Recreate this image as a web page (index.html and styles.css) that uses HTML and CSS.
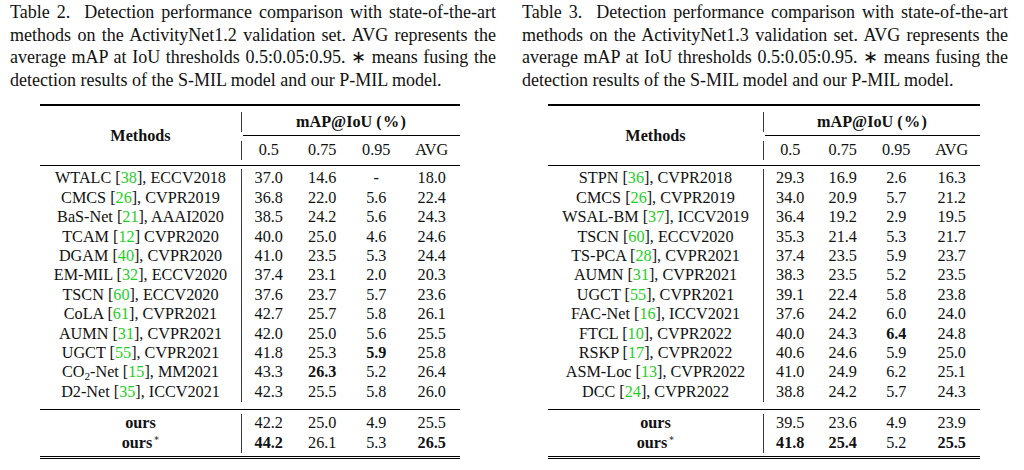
FILE: index.html
```html
<!DOCTYPE html>
<html lang="en">
<head>
<meta charset="utf-8">
<title>Detection performance tables</title>
<link rel="stylesheet" href="styles.css">
</head>
<body>
<main class="page">
  <section class="panel">
    <p class="caption">Table 2.&nbsp; Detection performance comparison with state-of-the-art methods on the ActivityNet1.2 validation set. AVG represents the average mAP at IoU thresholds 0.5:0.05:0.95. ∗ means fusing the detection results of the S-MIL model and our P-MIL model.</p>
    <table class="res res--left">
      <colgroup>
        <col class="c-m"><col class="c-a"><col class="c-b"><col class="c-c"><col class="c-d">
      </colgroup>
      <thead>
        <tr class="gap g6"><td colspan="5"></td></tr>
        <tr class="hdr1"><th class="m b" rowspan="5">Methods</th><th class="grp b vr" colspan="4">mAP@IoU (&#8202;%&#8202;)</th></tr>
        <tr class="gap g3"><td colspan="4"></td></tr>
        <tr class="cmid"><td colspan="4"><div class="cmid-line"></div></td></tr>
        <tr class="gap g5"><td colspan="4"></td></tr>
        <tr class="hdr2"><th class="vr">0.5</th><th>0.75</th><th>0.95</th><th>AVG</th></tr>
        <tr class="gap g5"><td colspan="5"></td></tr>
        <tr class="rule"><td colspan="5"></td></tr>
        <tr class="gap g3"><td colspan="5"></td></tr>
      </thead>
      <tbody>
        <tr><td class="m">WTALC [<span class="cite">38</span>], ECCV2018</td><td class="vr">37.0</td><td>14.6</td><td>-</td><td>18.0</td></tr>
        <tr><td class="m">CMCS [<span class="cite">26</span>], CVPR2019</td><td class="vr">36.8</td><td>22.0</td><td>5.6</td><td>22.4</td></tr>
        <tr><td class="m">BaS-Net [<span class="cite">21</span>], AAAI2020</td><td class="vr">38.5</td><td>24.2</td><td>5.6</td><td>24.3</td></tr>
        <tr><td class="m">TCAM [<span class="cite">12</span>] CVPR2020</td><td class="vr">40.0</td><td>25.0</td><td>4.6</td><td>24.6</td></tr>
        <tr><td class="m">DGAM [<span class="cite">40</span>], CVPR2020</td><td class="vr">41.0</td><td>23.5</td><td>5.3</td><td>24.4</td></tr>
        <tr><td class="m">EM-MIL [<span class="cite">32</span>], ECCV2020</td><td class="vr">37.4</td><td>23.1</td><td>2.0</td><td>20.3</td></tr>
        <tr><td class="m">TSCN [<span class="cite">60</span>], ECCV2020</td><td class="vr">37.6</td><td>23.7</td><td>5.7</td><td>23.6</td></tr>
        <tr><td class="m">CoLA [<span class="cite">61</span>], CVPR2021</td><td class="vr">42.7</td><td>25.7</td><td>5.8</td><td>26.1</td></tr>
        <tr><td class="m">AUMN [<span class="cite">31</span>], CVPR2021</td><td class="vr">42.0</td><td>25.0</td><td>5.6</td><td>25.5</td></tr>
        <tr><td class="m">UGCT [<span class="cite">55</span>], CVPR2021</td><td class="vr">41.8</td><td>25.3</td><td class="b">5.9</td><td>25.8</td></tr>
        <tr><td class="m">CO<sub>2</sub>-Net [<span class="cite">15</span>], MM2021</td><td class="vr">43.3</td><td class="b">26.3</td><td>5.2</td><td>26.4</td></tr>
        <tr><td class="m">D2-Net [<span class="cite">35</span>], ICCV2021</td><td class="vr">42.3</td><td>25.5</td><td>5.8</td><td>26.0</td></tr>
        <tr class="gap g7"><td colspan="5"></td></tr>
        <tr class="rule"><td colspan="5"></td></tr>
        <tr class="gap g4"><td colspan="5"></td></tr>
        <tr><td class="m b">ours</td><td class="vr">42.2</td><td>25.0</td><td>4.9</td><td>25.5</td></tr>
        <tr><td class="m b">ours<sup>∗</sup></td><td class="vr b">44.2</td><td>26.1</td><td>5.3</td><td class="b">26.5</td></tr>
        <tr class="gap g3"><td colspan="5"></td></tr>
      </tbody>
    </table>
  </section>

  <section class="panel">
    <p class="caption">Table 3.&nbsp; Detection performance comparison with state-of-the-art methods on the ActivityNet1.3 validation set. AVG represents the average mAP at IoU thresholds 0.5:0.05:0.95. ∗ means fusing the detection results of the S-MIL model and our P-MIL model.</p>
    <table class="res res--right">
      <colgroup>
        <col class="c-m"><col class="c-a"><col class="c-b"><col class="c-c"><col class="c-d">
      </colgroup>
      <thead>
        <tr class="gap g6"><td colspan="5"></td></tr>
        <tr class="hdr1"><th class="m b" rowspan="5">Methods</th><th class="grp b vr" colspan="4">mAP@IoU (&#8202;%&#8202;)</th></tr>
        <tr class="gap g3"><td colspan="4"></td></tr>
        <tr class="cmid"><td colspan="4"><div class="cmid-line"></div></td></tr>
        <tr class="gap g5"><td colspan="4"></td></tr>
        <tr class="hdr2"><th class="vr">0.5</th><th>0.75</th><th>0.95</th><th>AVG</th></tr>
        <tr class="gap g5"><td colspan="5"></td></tr>
        <tr class="rule"><td colspan="5"></td></tr>
        <tr class="gap g3"><td colspan="5"></td></tr>
      </thead>
      <tbody>
        <tr><td class="m">STPN [<span class="cite">36</span>], CVPR2018</td><td class="vr">29.3</td><td>16.9</td><td>2.6</td><td>16.3</td></tr>
        <tr><td class="m">CMCS [<span class="cite">26</span>], CVPR2019</td><td class="vr">34.0</td><td>20.9</td><td>5.7</td><td>21.2</td></tr>
        <tr><td class="m">WSAL-BM [<span class="cite">37</span>], ICCV2019</td><td class="vr">36.4</td><td>19.2</td><td>2.9</td><td>19.5</td></tr>
        <tr><td class="m">TSCN [<span class="cite">60</span>], ECCV2020</td><td class="vr">35.3</td><td>21.4</td><td>5.3</td><td>21.7</td></tr>
        <tr><td class="m">TS-PCA [<span class="cite">28</span>], CVPR2021</td><td class="vr">37.4</td><td>23.5</td><td>5.9</td><td>23.7</td></tr>
        <tr><td class="m">AUMN [<span class="cite">31</span>], CVPR2021</td><td class="vr">38.3</td><td>23.5</td><td>5.2</td><td>23.5</td></tr>
        <tr><td class="m">UGCT [<span class="cite">55</span>], CVPR2021</td><td class="vr">39.1</td><td>22.4</td><td>5.8</td><td>23.8</td></tr>
        <tr><td class="m">FAC-Net [<span class="cite">16</span>], ICCV2021</td><td class="vr">37.6</td><td>24.2</td><td>6.0</td><td>24.0</td></tr>
        <tr><td class="m">FTCL [<span class="cite">10</span>], CVPR2022</td><td class="vr">40.0</td><td>24.3</td><td class="b">6.4</td><td>24.8</td></tr>
        <tr><td class="m">RSKP [<span class="cite">17</span>], CVPR2022</td><td class="vr">40.6</td><td>24.6</td><td>5.9</td><td>25.0</td></tr>
        <tr><td class="m">ASM-Loc [<span class="cite">13</span>], CVPR2022</td><td class="vr">41.0</td><td>24.9</td><td>6.2</td><td>25.1</td></tr>
        <tr><td class="m">DCC [<span class="cite">24</span>], CVPR2022</td><td class="vr">38.8</td><td>24.2</td><td>5.7</td><td>24.3</td></tr>
        <tr class="gap g7"><td colspan="5"></td></tr>
        <tr class="rule"><td colspan="5"></td></tr>
        <tr class="gap g4"><td colspan="5"></td></tr>
        <tr><td class="m b">ours</td><td class="vr">39.5</td><td>23.6</td><td>4.9</td><td>23.9</td></tr>
        <tr><td class="m b">ours<sup>∗</sup></td><td class="vr b">41.8</td><td class="b">25.4</td><td>5.2</td><td class="b">25.5</td></tr>
        <tr class="gap g3"><td colspan="5"></td></tr>
      </tbody>
    </table>
  </section>
</main>
</body>
</html>
```

FILE: styles.css
```css
html, body {
  margin: 0;
  background: #ffffff;
}

body {
  color: #111111;
  font-family: "Liberation Serif", "Times New Roman", serif;
}

.page {
  display: flex;
  gap: 26px;
  padding: 1px 0 0 10px;
}

.panel {
  width: 486px;
  flex: none;
}

.caption {
  margin: 0;
  font-size: 18px;
  line-height: 22.6px;
  text-align: justify;
}

.res {
  border-collapse: separate;
  border-spacing: 0;
  table-layout: fixed;
  font-size: 16.2px;
  margin-top: 13px;
  border-top: 2px solid #000000;
  border-bottom: 3px double #000000;
}

.res--left {
  width: 420px;
  margin-left: 30px;
}

.res--right {
  width: 432px;
  margin-left: 26px;
}

.res--left .c-m { width: 201px; }
.res--left .c-a { width: 54.5px; }
.res--left .c-b { width: 53.5px; }
.res--left .c-c { width: 54.5px; }
.res--left .c-d { width: 56.5px; }

.res--right .c-m { width: 215px; }
.res--right .c-a { width: 53.5px; }
.res--right .c-b { width: 52.5px; }
.res--right .c-c { width: 54.5px; }
.res--right .c-d { width: 56.5px; }

.res th,
.res td {
  padding: 0;
  text-align: center;
  font-weight: normal;
  line-height: 19.4px;
  white-space: nowrap;
}

.res .b {
  font-weight: bold;
}

.res .vr {
  border-left: 1px solid #3a3a3a;
}

.res .hdr1 th {
  line-height: 20px;
}

.res .hdr2 th {
  line-height: 19px;
}

.res .gap td {
  padding: 0;
  line-height: 0;
  font-size: 0;
}

.res .g3 td { height: 3px; }
.res .g4 td { height: 4px; }
.res .g5 td { height: 5px; }
.res .g6 td { height: 6px; }
.res .g7 td { height: 7px; }

.res .rule td {
  height: 0;
  line-height: 0;
  font-size: 0;
  border-top: 1px solid #000000;
}

.res .cmid td {
  height: 0;
  line-height: 0;
  font-size: 0;
}

.cmid-line {
  margin-left: 2px;
  border-top: 1px solid #000000;
}

.cite {
  color: #1ed01e;
}

.res sub {
  font-size: 0.7em;
  line-height: 0;
  vertical-align: -0.3em;
}

.res sup {
  font-family: "DejaVu Serif", serif;
  font-weight: normal;
  font-size: 0.55em;
  line-height: 0;
  vertical-align: 0.7em;
  margin-left: 1px;
}
```
